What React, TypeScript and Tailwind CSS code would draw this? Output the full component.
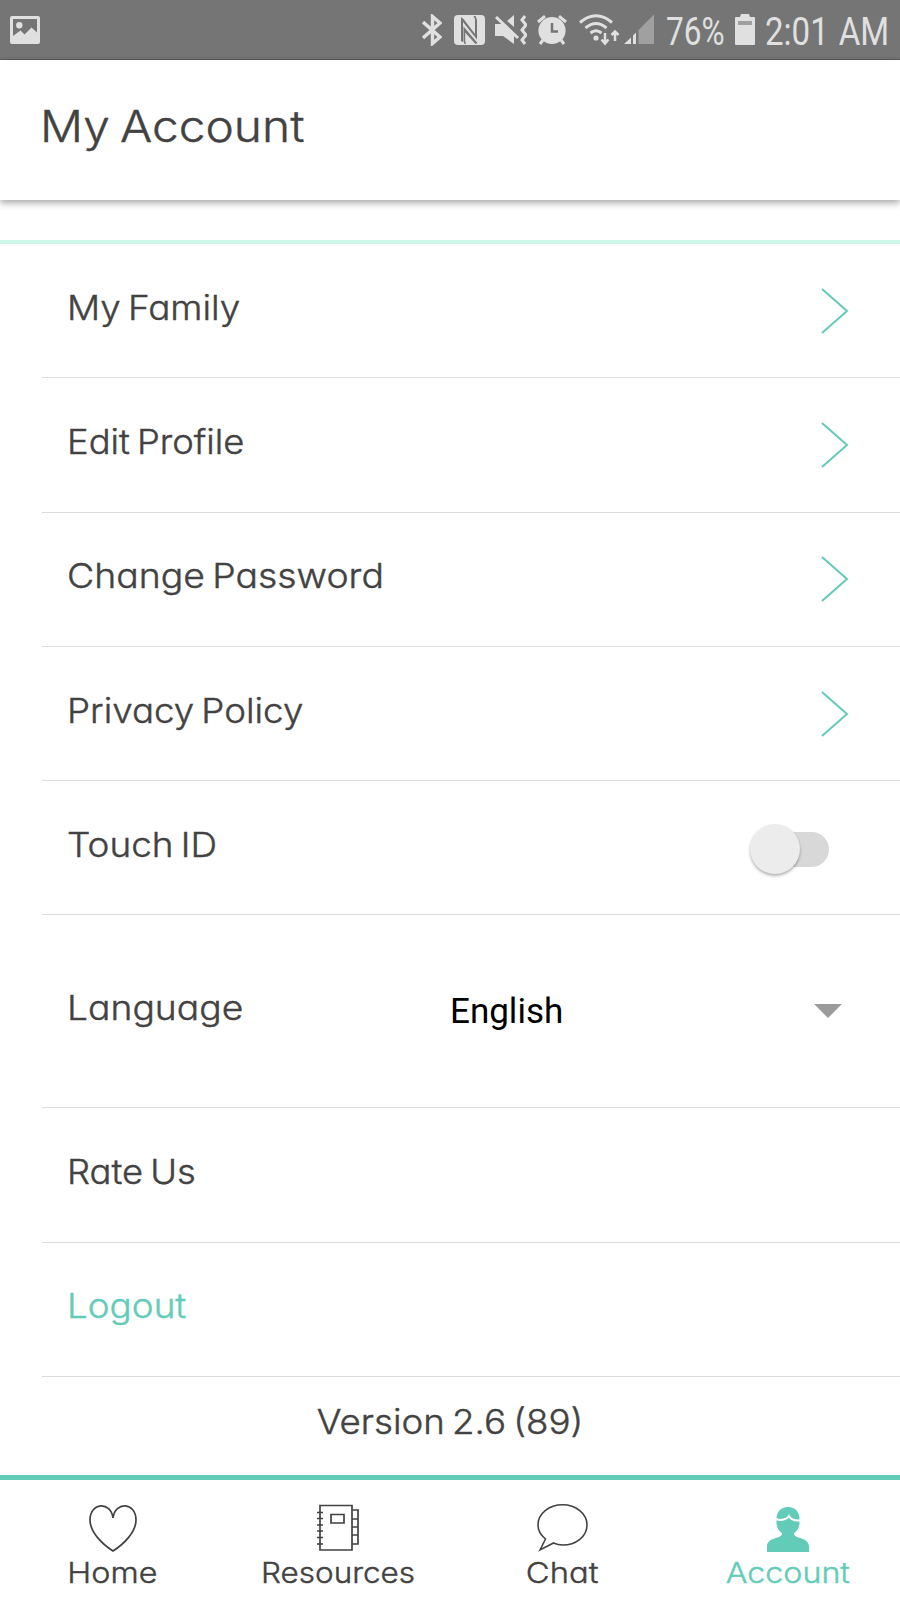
import React from 'react';
import clsx from 'clsx';

const rows = [
  { label: 'My Family', stretch: 'scale-x-[1.084]', control: 'chevron' },
  { label: 'Edit Profile', stretch: 'scale-x-[1.07]', control: 'chevron' },
  { label: 'Change Password', stretch: 'scale-x-[1.1]', control: 'chevron' },
  { label: 'Privacy Policy', stretch: 'scale-x-[1.08]', control: 'chevron' },
  { label: 'Touch ID', stretch: 'scale-x-[1.086]', control: 'switch' },
  { label: 'Language', stretch: 'scale-x-[1.096]', control: 'select' },
  { label: 'Rate Us', stretch: 'scale-x-[1.07]', control: 'none' },
  { label: 'Logout', stretch: 'scale-x-[1.083]', control: 'none' },
];

const StatusBar = () => (
  <div className="h-[60px] shrink-0 bg-[#757575] border-b border-[#5c5c5c] flex items-center text-[#e0e0e0] font-[Roboto,sans-serif] font-normal [word-spacing:0px] [-webkit-text-stroke:0px]">
    <svg className="ml-[10px] w-[30px] h-[28px]" viewBox="0 0 30 28">
      <path fill="currentColor" fillRule="evenodd" d="M2 0H28a2 2 0 0 1 2 2V26a2 2 0 0 1-2 2H2a2 2 0 0 1-2-2V2a2 2 0 0 1 2-2ZM3 3V20L10.500 14.500L14.500 18.500L21.500 11.500L27 16.500V3ZM9.300 6a3.200 3.200 0 1 1 0 6.400a3.200 3.200 0 0 1 0-6.400Z" />
    </svg>
    <svg className="ml-[382px] w-[20px] h-[32px]" viewBox="0 0 20 32" fill="none" stroke="currentColor" strokeWidth="3.4">
      <path d="M1 8L18 23L10.500 29.500V2.500L18 9L1 24" />
    </svg>
    <svg className="ml-[12px] w-[31px] h-[30px]" viewBox="0 0 31 30">
      <rect width="31" height="30" rx="4" fill="currentColor" />
      <path d="M7 2L9.500 4L21 19V4L19.500 1H21.500L23 5V24.500L9 7V27L7 26Z" fill="#757575" />
      <path d="M9.500 11.500L23.500 28L21.500 29L11.200 17.500V26L12 29H10.500L9.500 26Z" fill="#757575" />
    </svg>
    <svg className="ml-[10px] w-[32px] h-[32px]" viewBox="0 0 32 32" fill="none" stroke="currentColor">
      <path d="M0 10H7L19 21V30L8 22H0ZM12 7L19 1V13Z" fill="currentColor" stroke="none" />
      <path d="M1 3L23 24" strokeWidth="3" />
      <path d="M30 2L27 6L31 11L27 16L31 21L27 26L30 30" strokeWidth="3" />
    </svg>
    <svg className="ml-[10px] w-[30px] h-[30px]" viewBox="0 0 30 30" fill="none" stroke="currentColor">
      <circle cx="15" cy="15.500" r="13.600" fill="currentColor" stroke="none" />
      <path d="M1 7L8 1.200M22 1.200L29 7M6 25L3 29M24 25L27 29" strokeWidth="3" />
      <path d="M15 8V16.500H21" stroke="#757575" strokeWidth="2.500" />
    </svg>
    <svg className="ml-[12px] w-[42px] h-[32px]" viewBox="0 0 42 32" fill="none" stroke="currentColor" strokeWidth="3">
      <path d="M1 8.500Q17 -5 33 8.500M6.500 14Q17 5 27.500 14M11.500 19Q17 14.500 22.500 19" />
      <circle cx="17" cy="24" r="2.600" fill="currentColor" stroke="none" />
      <path d="M26 19V28M22.500 25.500L26 29.500L29.500 25.500M36 27V18M32.500 21L36 17.500L39.500 21" strokeWidth="2.500" />
    </svg>
    <svg className="ml-[3px] w-[31px] h-[31px]" viewBox="0 0 31 31">
      <path d="M0 30L7 23.500V30ZM9 21.500L12 18.500V30H9Z" fill="currentColor" />
      <path d="M14.500 16L30 0.500V30H14.500Z" fill="#a0a0a0" />
    </svg>
    <span className="ml-[11px] mt-[4px] w-[59px] text-[38px] leading-none whitespace-nowrap origin-left scale-x-[0.83]">76%</span>
    <svg className="ml-[10px] w-[20px] h-[31px]" viewBox="0 0 20 31">
      <path d="M6 0H14L15 3H19Q20 3 20 4V30Q20 31 19 31H1Q0 31 0 30V4Q0 3 1 3H5Z" fill="currentColor" />
      <path d="M3 7H17V11H3Z" fill="#a0a0a0" />
    </svg>
    <span className="ml-[10px] mt-[4px] w-[124px] text-[38px] leading-none whitespace-nowrap origin-left scale-x-[0.87] [word-spacing:2px]">2:01 AM</span>
  </div>
);

const Chevron = () => (
  <svg className="w-7 h-[46px] mr-[51px] text-[#62ccb9]" viewBox="0 0 28 46" fill="none" stroke="currentColor" strokeWidth="2">
    <path d="M1 1L26 23L1 45" />
  </svg>
);

const Switch = () => (
  <div className="relative w-[78px] h-[35px] mr-[71px] mt-[3px]">
    <div className="ml-5 h-[35px] rounded-full bg-[#d8d8d8]" />
    <div className="absolute -left-px -top-2 w-[50px] h-[50px] rounded-full bg-[#ececec] shadow-[0_2px_3px_rgba(0,0,0,0.3)]" />
  </div>
);

const Row = ({ label, stretch, control }: (typeof rows)[number]) => (
  <div
    className={clsx(
      'ml-[42px] pl-[25px] flex items-center border-b border-[#dcdcdc]',
      control === 'select' ? 'h-[193px]' : 'h-[134.3px]',
      label === 'Logout' && 'text-[#62ccb9]'
    )}
  >
    <span className={clsx('text-[34px] leading-none pb-[6px] whitespace-nowrap origin-left', stretch, control === 'select' ? 'w-[383px]' : 'mr-auto')}>{label}</span>
    {control === 'chevron' && <Chevron />}
    {control === 'switch' && <Switch />}
    {control === 'select' && (
      <div className="flex-1 flex items-center justify-between pr-[58px] text-black font-[Roboto,sans-serif] font-normal [-webkit-text-stroke:0px]">
        <span className="text-[35px] leading-none">English</span>
        <svg className="w-7 h-[14px] -mt-px" viewBox="0 0 28 14">
          <path d="M0 0H28L14 14Z" fill="#9b9b9b" />
        </svg>
      </div>
    )}
  </div>
);

const HeartIcon = () => (
  <svg className="w-12 h-12" viewBox="0 0 48 48" fill="none" stroke="currentColor" strokeWidth="1.7">
    <path d="M24 14C22 -3 1 -2 1 16C1 28 13 40 24 47C35 40 47 28 47 16C47 -2 26 -3 24 14Z" />
  </svg>
);

const NotebookIcon = () => (
  <svg className="w-[42px] h-12" viewBox="0 0 42 48" fill="none" stroke="currentColor" strokeWidth="1.700">
    <path d="M3 1.500H35V46H3ZM14 10.500H27V19H14ZM35 6H41V40H35M35 15H41M35 23H41M35 31H41" />
    <path d="M0 8.500H6M0 14.500H6M0 21H6M0 27H6M0 33.500H6M0 40H6" />
  </svg>
);

const ChatIcon = () => (
  <svg className="w-[51px] h-12" viewBox="0 0 51 48" fill="none" stroke="currentColor" strokeWidth="1.600">
    <path d="M3 46L8.500 35C3.500 31 1 26 1 21C1 9.500 12 0.800 25.500 0.800S50 9.500 50 21S39 41 25.500 41Q21 41 16.500 39Z" />
  </svg>
);

const AccountIcon = () => (
  <svg className="w-[42px] h-12" viewBox="0 0 42 48" fill="none">
    <path d="M21 3C13.500 3 9.500 8 9.500 15V19C9.500 23.500 12 27 15 29C15 36 0 32 0 43V48H42V43C42 32 27 36 27 29C30 27 32.500 23.500 32.500 19V15C32.500 8 28.500 3 21 3Z" fill="currentColor" />
    <path d="M9 15C14 17 20 15.500 22 12C24 15.500 28 17 33 16.500" stroke="white" strokeWidth="2" />
  </svg>
);

const tabs = [
  { label: 'Home', icon: <HeartIcon />, stretch: 'scale-x-[1.115]' },
  { label: 'Resources', icon: <NotebookIcon />, stretch: 'scale-x-[1.085]' },
  { label: 'Chat', icon: <ChatIcon />, stretch: 'scale-x-[1.13]' },
  { label: 'Account', icon: <AccountIcon />, stretch: 'scale-x-[1.11]' },
];

export default function App() {
  return (
    <div className="w-[900px] h-[1600px] overflow-hidden flex flex-col bg-white text-[#424242] font-[Inter,sans-serif] font-light [font-feature-settings:'cv11'] [font-optical-sizing:none] [word-spacing:-3px] [-webkit-text-stroke:0.4px]">
      <StatusBar />
      <header className="h-[140px] shrink-0 bg-white pl-10 pt-[45px] shadow-[0_3px_7px_rgba(0,0,0,0.35)]">
        <h1 className="text-[43.500px] leading-none origin-left scale-x-[1.1] w-fit">My Account</h1>
      </header>

      <main className="flex-1 pt-10">
        <div className="h-1 bg-[#ccf6e7]" />
        {rows.map(row => (
          <Row key={row.label} {...row} />
        ))}
        <p className="mt-[28px] text-center text-[34px] leading-none scale-x-[1.08]">Version 2.6 (89)</p>
      </main>

      <nav className="h-[125px] shrink-0 border-t-5 border-[#62ccb9] grid grid-cols-4">
        {tabs.map(tab => (
          <div key={tab.label} className={clsx('flex flex-col items-center pt-6', tab.label === 'Account' && 'text-[#62ccb9]')}>
            {tab.icon}
            <span className={clsx('mt-[6px] text-[29px] leading-none', tab.stretch)}>{tab.label}</span>
          </div>
        ))}
      </nav>
    </div>
  );
}
